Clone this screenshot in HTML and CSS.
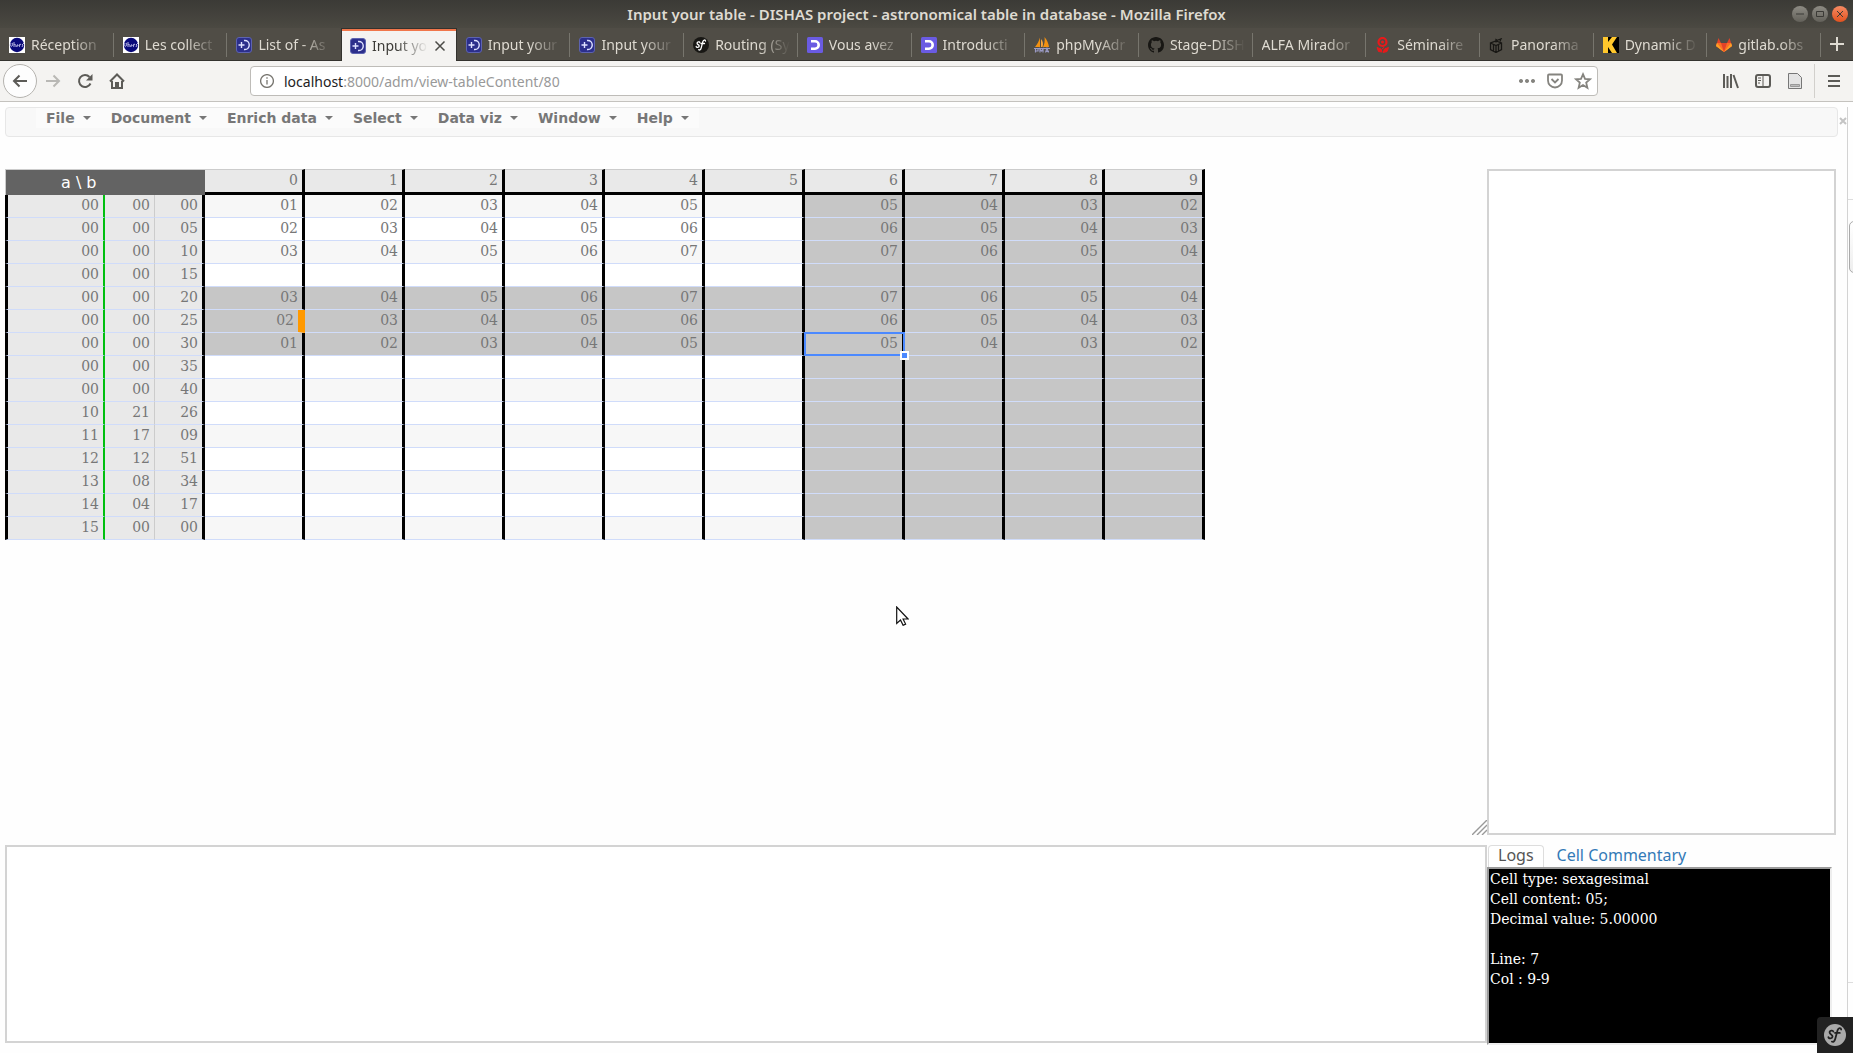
FILE: index.html
```html
<!DOCTYPE html>
<html lang="en">
<head>
<meta charset="utf-8">
<title>Input your table - DISHAS project</title>
<link rel="stylesheet" href="styles.css">
</head>
<body>
<svg class="defs" aria-hidden="true">
  <symbol id="obs" viewBox="0 0 16 16"><path fill="#fff" d="M0 0h16v16H0z"/><circle cx="8" cy="8" r="7.2" fill="#0a0a7a"/><path d="M2 6c-1 3 0 4 1 3s1-3 0-3M5 5v5M5 8c1-1 2-1 2 2M8 10c0-3 1-3 1-1M10 9c2-1 2-2 1-2s-1 3 0 3M13 7l1 1-1 2M14 6l1 1" fill="none" stroke="#c9c9ee" stroke-width=".9"/></symbol>
  <symbol id="dishas" viewBox="0 0 16 16"><rect x=".5" y=".5" width="15" height="15" rx="2.5" fill="#2c2f8c" stroke="#5d63b0"/><path d="M2.500 8h6M5.500 5v6M8 3.500c7-1 7 10 0 9" fill="none" stroke="#dfe2ff" stroke-width="1.400"/></symbol>
  <symbol id="symfony" viewBox="0 0 16 16"><circle cx="8" cy="8" r="8" fill="var(--disc)"/><path d="M6.800 5.600c-.2-1.300-2.900-.9-2.700.7.200 1.400 2.300 1.300 2.100 2.900-.2 1.500-2.900 1.700-3 .3M12.500 4c-.2-1.400-1.900-1.300-2.600.4L8.200 10.800c-.5 1.900-1.500 2.600-2.500 2M8 6.500h3.500" fill="none" stroke="var(--mark)" stroke-width="1.300" stroke-linecap="round"/></symbol>
  <symbol id="purple" viewBox="0 0 16 16"><rect width="16" height="16" rx="1.500" fill="#6a5be2"/><path d="M4 4.300h4a3.700 3.700 0 0 1 0 7.400H4" fill="none" stroke="#fff" stroke-width="2.600"/></symbol>
  <symbol id="pma" viewBox="0 0 16 16"><path d="M6 0.500v9.500H1C3.500 7 5 4 6 .5zM10.500 0c2.500 3 4 6 4.500 10H9c1.500-3 2-6 1.500-10z" fill="#f29111"/><path d="M7 2v8h1.500C9.500 7 9 4 7 2z" fill="#f7a53e"/><path d="M0 11.500h16M1.500 15.500v-4M1.500 14h2.500v-2.500M6 15.500v-3.500l1.500 2L9 12v3.500M11.500 15.500l1.500-4 1.500 4M12 14.500h3" fill="none" stroke="#9a9ac4" stroke-width="1.200"/></symbol>
  <symbol id="github" viewBox="0 0 16 16"><path fill="#181714" d="M8 0C3.580 0 0 3.580 0 8c0 3.540 2.290 6.530 5.470 7.590.4.070.55-.17.55-.38 0-.19-.01-.82-.01-1.490-2.010.37-2.530-.49-2.690-.94-.09-.23-.48-.94-.82-1.130-.28-.15-.68-.52-.01-.53.63-.01 1.080.58 1.230.82.72 1.210 1.870.87 2.330.66.07-.52.28-.87.51-1.070-1.780-.2-3.640-.89-3.640-3.950 0-.87.31-1.590.82-2.150-.08-.2-.36-1.020.08-2.120 0 0 .67-.21 2.200.82a7.500 7.500 0 0 1 4 0c1.530-1.040 2.200-.82 2.200-.82.44 1.100.16 1.920.08 2.120.51.56.82 1.270.82 2.150 0 3.070-1.870 3.750-3.650 3.950.29.25.54.73.54 1.480 0 1.070-.01 1.930-.01 2.200 0 .21.15.46.55.38A8 8 0 0 0 16 8c0-4.420-3.580-8-8-8z"/></symbol>
  <symbol id="flower" viewBox="0 0 16 16"><circle cx="7.500" cy="5" r="4" fill="none" stroke="#e8191a" stroke-width="2.200"/><circle cx="7.500" cy="5" r="1.500" fill="#e8191a"/><path d="M7.500 8.500l1 2M2 10.500l4 1.500 1 3-3.500-.5zM13.500 10.500L9.500 12l-1.500 3.500 4-1zM7 12l2-1.500" fill="#e8191a" stroke="#e8191a"/></symbol>
  <symbol id="cube" viewBox="0 0 16 16"><path d="M7 4l5.500 2v6.500L7 15.500l-5.500-3V6zM1.500 6L7 8.500 12.500 6M7 8.500v7M4.500 7.500v6M9.500 7.500v6M7 5.500V2.500l2 1M9 3l4-1.500M11 4.500l1-3" fill="none" stroke="#181714" stroke-width="1.300"/></symbol>
  <symbol id="kay" viewBox="0 0 16 16"><path fill="#000" d="M0 0h16v16H0z"/><path fill="#ffc72c" d="M0 0h5v5l4-5h5L9 7.500l5 8.500H9L5 10v6H0z"/></symbol>
  <symbol id="gitlab" viewBox="0 0 16 16"><path fill="#e24329" d="M8 15L0 9l2.500-8L5 6h6l2.500-5L16 9z"/><path fill="#fc6d26" d="M8 15L5 6H1L0 9zM8 15l3-9h4l1 3z"/><path fill="#fca326" d="M8 15L1 6 0 9zM8 15l7-9 1 3z"/></symbol>
</svg>

<header class="browser">
  <div class="titlebar">
    <span class="win-title">Input your table - DISHAS project - astronomical table in database - Mozilla Firefox</span>
    <div class="win-buttons">
      <button class="win" aria-label="Minimize"><svg viewBox="0 0 16 16"><path d="M4 8h8"/></svg></button>
      <button class="win" aria-label="Maximize"><svg viewBox="0 0 16 16"><path d="M4.500 5.500h7v5h-7z"/></svg></button>
      <button class="win win-close" aria-label="Close"><svg viewBox="0 0 16 16"><path d="M5 5l6 6M11 5l-6 6"/></svg></button>
    </div>
  </div>
  <nav class="tabs" aria-label="Tabs">
    <a class="tab" href="#"><svg class="fav"><use href="#obs"/></svg><span class="label">Réception</span></a>
    <a class="tab" href="#"><svg class="fav"><use href="#obs"/></svg><span class="label">Les collect</span></a>
    <a class="tab" href="#"><svg class="fav"><use href="#dishas"/></svg><span class="label">List of - As</span></a>
    <a class="tab active" href="#"><svg class="fav"><use href="#dishas"/></svg><span class="label">Input yo</span><svg class="tab-close" viewBox="0 0 12 12"><path d="M1.500 1.500l9 9M10.500 1.500l-9 9"/></svg></a>
    <a class="tab" href="#"><svg class="fav"><use href="#dishas"/></svg><span class="label">Input your</span></a>
    <a class="tab" href="#"><svg class="fav"><use href="#dishas"/></svg><span class="label">Input your</span></a>
    <a class="tab" href="#"><svg class="fav sf-dark"><use href="#symfony"/></svg><span class="label">Routing (Sy</span></a>
    <a class="tab" href="#"><svg class="fav"><use href="#purple"/></svg><span class="label">Vous avez</span></a>
    <a class="tab" href="#"><svg class="fav"><use href="#purple"/></svg><span class="label">Introducti</span></a>
    <a class="tab" href="#"><svg class="fav"><use href="#pma"/></svg><span class="label">phpMyAdr</span></a>
    <a class="tab" href="#"><svg class="fav"><use href="#github"/></svg><span class="label">Stage-DISH</span></a>
    <a class="tab" href="#"><span class="label">ALFA Mirador</span></a>
    <a class="tab" href="#"><svg class="fav"><use href="#flower"/></svg><span class="label">Séminaire</span></a>
    <a class="tab" href="#"><svg class="fav"><use href="#cube"/></svg><span class="label">Panorama</span></a>
    <a class="tab" href="#"><svg class="fav"><use href="#kay"/></svg><span class="label">Dynamic D</span></a>
    <a class="tab" href="#"><svg class="fav"><use href="#gitlab"/></svg><span class="label">gitlab.obs</span></a>
    <button class="new-tab" aria-label="New tab"><svg viewBox="0 0 14 14"><path d="M7 0v14M0 7h14"/></svg></button>
  </nav>
  <div class="toolbar">
    <div class="nav-buttons">
      <button class="tool back" aria-label="Back"><svg viewBox="0 0 16 16"><path d="M15 8H2M7.500 2.500L2 8l5.500 5.500"/></svg></button>
      <button class="tool forward" aria-label="Forward"><svg viewBox="0 0 16 16"><path d="M1 8h13M8.500 2.500L14 8l-5.500 5.500"/></svg></button>
      <button class="tool" aria-label="Reload"><svg viewBox="0 0 16 16"><path d="M13.500 10.500A6 6 0 1 1 12.500 4"/><path class="solid" d="M15.500 1v6.500H9z"/></svg></button>
      <button class="tool" aria-label="Home"><svg viewBox="0 0 16 16"><path d="M1 8.500L8 1.500l7 7M3 8v7h10V8"/><path class="solid" d="M6 9h4v6H6z"/></svg></button>
    </div>
    <div class="urlbar">
      <svg class="info" viewBox="0 0 14 14"><circle cx="7" cy="7" r="6.400"/><path d="M7 6v4.500M7 3.300v1.400"/></svg>
      <a class="url" href="#"><b>localhost</b>:8000/adm/view-tableContent/80</a>
      <button class="tool pale" aria-label="Page actions"><svg viewBox="0 0 16 16"><path class="solid" d="M2 6a2 2 0 1 0 .01 0zM8 6a2 2 0 1 0 .01 0zM14 6a2 2 0 1 0 .01 0z"/></svg></button>
      <button class="tool pale" aria-label="Save to Pocket"><svg viewBox="0 0 16 16"><path d="M2 1.500h12q1 0 1 1V7.500a7 7 0 0 1-14 0V2.500q0-1 1-1zM4.500 6L8 9.500 11.500 6"/></svg></button>
      <button class="tool pale" aria-label="Bookmark"><svg viewBox="0 0 16 16"><path d="M8 1.200l2 4.700 5 .4-3.800 3.300 1.200 5.200L8 12l-4.400 2.800 1.200-5.200L1 6.300l5-.4z"/></svg></button>
    </div>
    <div class="tool-buttons">
      <button class="tool" aria-label="Library"><svg viewBox="0 0 16 16"><path d="M1 1v14M4.500 3v12M8 1v14M10.500 2L15 15"/></svg></button>
      <button class="tool" aria-label="Sidebar"><svg viewBox="0 0 16 16"><rect x="1" y="2" width="14" height="12" rx="2"/><path d="M8 2v12M3 5h3M3 7.500h3M3 10h2" stroke-width="1"/></svg></button>
      <button class="tool" aria-label="Reader"><svg viewBox="0 0 16 16"><path class="sheet" d="M1.500.5h9l4 4v11h-13z"/><path class="sheet-bar" d="M3.500 11.500h9v2h-9z"/></svg></button>
    </div>
    <button class="tool menu" aria-label="Menu"><svg viewBox="0 0 12 16"><path d="M0 3h12M0 8h12M0 13h12"/></svg></button>
  </div>
</header>

<div class="page">
  <main class="content">
    <nav class="menubar" aria-label="Main menu">
      <button>File</button>
      <button>Document</button>
      <button>Enrich data</button>
      <button>Select</button>
      <button>Data viz</button>
      <button>Window</button>
      <button>Help</button>
    </nav>
    <div class="workspace">
      <section class="sheet-area">
        <table class="grid">
          <colgroup><col class="w-arg"><col class="w-half"><col class="w-half"><col span="10" class="w-val"></colgroup>
          <thead><tr><th class="corner" colspan="3">a \ b</th><th>0</th><th>1</th><th>2</th><th>3</th><th>4</th><th>5</th><th>6</th><th>7</th><th>8</th><th>9</th></tr></thead>
          <tbody>
            <tr><th>00</th><th>00</th><th>00</th><td>01</td><td>02</td><td>03</td><td>04</td><td>05</td><td></td><td>05</td><td>04</td><td>03</td><td>02</td></tr>
            <tr><th>00</th><th>00</th><th>05</th><td>02</td><td>03</td><td>04</td><td>05</td><td>06</td><td></td><td>06</td><td>05</td><td>04</td><td>03</td></tr>
            <tr><th>00</th><th>00</th><th>10</th><td>03</td><td>04</td><td>05</td><td>06</td><td>07</td><td></td><td>07</td><td>06</td><td>05</td><td>04</td></tr>
            <tr><th>00</th><th>00</th><th>15</th><td></td><td></td><td></td><td></td><td></td><td></td><td></td><td></td><td></td><td></td></tr>
            <tr class="locked"><th>00</th><th>00</th><th>20</th><td>03</td><td>04</td><td>05</td><td>06</td><td>07</td><td></td><td>07</td><td>06</td><td>05</td><td>04</td></tr>
            <tr class="locked"><th>00</th><th>00</th><th>25</th><td class="noted">02</td><td>03</td><td>04</td><td>05</td><td>06</td><td></td><td>06</td><td>05</td><td>04</td><td>03</td></tr>
            <tr class="locked"><th>00</th><th>00</th><th>30</th><td>01</td><td>02</td><td>03</td><td>04</td><td>05</td><td></td><td class="selected">05</td><td>04</td><td>03</td><td>02</td></tr>
            <tr><th>00</th><th>00</th><th>35</th><td></td><td></td><td></td><td></td><td></td><td></td><td></td><td></td><td></td><td></td></tr>
            <tr><th>00</th><th>00</th><th>40</th><td></td><td></td><td></td><td></td><td></td><td></td><td></td><td></td><td></td><td></td></tr>
            <tr><th>10</th><th>21</th><th>26</th><td></td><td></td><td></td><td></td><td></td><td></td><td></td><td></td><td></td><td></td></tr>
            <tr><th>11</th><th>17</th><th>09</th><td></td><td></td><td></td><td></td><td></td><td></td><td></td><td></td><td></td><td></td></tr>
            <tr><th>12</th><th>12</th><th>51</th><td></td><td></td><td></td><td></td><td></td><td></td><td></td><td></td><td></td><td></td></tr>
            <tr><th>13</th><th>08</th><th>34</th><td></td><td></td><td></td><td></td><td></td><td></td><td></td><td></td><td></td><td></td></tr>
            <tr><th>14</th><th>04</th><th>17</th><td></td><td></td><td></td><td></td><td></td><td></td><td></td><td></td><td></td><td></td></tr>
            <tr><th>15</th><th>00</th><th>00</th><td></td><td></td><td></td><td></td><td></td><td></td><td></td><td></td><td></td><td></td></tr>
          </tbody>
        </table>
        <svg class="grip" viewBox="0 0 15 15"><path d="M0 15L15 0M5 15L15 5M10 15l5-5"/></svg>
      </section>
      <section class="box"></section>
      <section class="box"></section>
      <section class="info-panel">
        <nav class="panel-tabs"><a class="current" href="#">Logs</a><a href="#">Cell Commentary</a></nav>
        <div class="log" role="log">Cell type: sexagesimal
Cell content: 05;
Decimal value: 5.00000

Line: 7
Col : 9-9</div>
      </section>
    </div>
  </main>
  <aside class="drawer">
    <button class="drawer-close" aria-label="Close panel"><svg viewBox="0 0 8 8"><path d="M1 1l6 6M7 1L1 7"/></svg></button>
    <div class="drawer-edge"><div class="drawer-head"></div><button class="drawer-button" aria-label="Open"></button><div class="drawer-foot"></div></div>
  </aside>
</div>
<button class="sf-toolbar" aria-label="Symfony toolbar"><svg class="sf-light"><use href="#symfony"/></svg></button>
<svg class="pointer" viewBox="0 0 13 20"><path d="M.7 1v16.500l3.800-3.500 2.600 5.300 2.500-1.200-2.500-5.100h5z"/></svg>
</body>
</html>
```
FILE: styles.css
```css
*, *::before, *::after { box-sizing: border-box; }
body {
  margin: 0;
  min-height: 100vh;
  display: flex;
  flex-direction: column;
  background: #fefefe;
  font-family: "DejaVu Serif", serif;
  font-size: 14px;
  line-height: 20px;
  color: #777;
}
button { border: 0; padding: 0; margin: 0; background: none; font: inherit; color: inherit; }
a { text-decoration: none; color: inherit; }
svg { display: block; }
.defs { position: absolute; width: 0; height: 0; }

/* browser window */
.browser { font-family: "Noto Sans", sans-serif; }
.titlebar {
  display: flex;
  align-items: center;
  height: 28px;
  padding: 0 5px 0 61px;
  background: linear-gradient(#3b3a36, #4b4942);
}
.win-title { flex: 1; text-align: center; font-size: 15px; font-weight: 600; color: #dfdbd2; line-height: 28px; }
.win-buttons { display: flex; gap: 4px; }
.win { width: 16px; height: 16px; border-radius: 8px; background: linear-gradient(#8d8b84, #63615a); }
.win svg { fill: none; stroke: #3b3a36; }
.win-close { background: linear-gradient(#f58a63, #e2521f); }

.tabs { display: flex; height: 33px; background: #504d46; border-bottom: 1px solid #33322e; }
.tab {
  flex: 1;
  min-width: 0;
  display: flex;
  align-items: center;
  gap: 6px;
  padding: 2px 9px 0 9px;
  color: #dfdbd2;
  background: linear-gradient(#77756d, #77756d) right 5px / 1px 24px no-repeat;
}
.fav { width: 16px; height: 16px; flex: none; }
.sf-dark { --disc: #181714; --mark: #fff; }
.label {
  flex: 1;
  white-space: nowrap;
  mask-image: linear-gradient(to left, transparent, #000 32px);
}
.tab:has(+ .active) { background: none; }
.tab.active {
  height: 33px;
  padding: 1px 10px 0 8px;
  color: #3b3a36;
  background: linear-gradient(#f0764b, #f0764b) 0 0 / 100% 2px no-repeat #f4f3f1;
  border: solid #33322e;
  border-width: 1px 1px 0;
}
.tab-close { width: 12px; height: 12px; fill: none; stroke: #4c4b47; stroke-width: 1.5; }
.new-tab { width: 32px; display: grid; place-items: center; }
.new-tab svg { width: 14px; stroke: #dfdbd2; stroke-width: 2; }

.toolbar {
  display: flex;
  align-items: center;
  height: 41px;
  padding: 0 13px 0 3px;
  background: #f4f3f1;
  border-bottom: 1px solid #c4c2be;
}
.tool { color: #5c5b57; }
.tool svg { width: 16px; height: 16px; overflow: visible; fill: none; stroke: currentColor; stroke-width: 2; }
.tool .solid { fill: currentColor; stroke: none; }
.nav-buttons { display: flex; align-items: center; width: 247px; gap: 16px; }
.back { width: 34px; height: 34px; margin-right: -8px; border: 1px solid #b5b3af; border-radius: 17px; background: #fdfdfd; display: grid; place-items: center; }
.forward { color: #b9b8b5; }
.urlbar {
  flex: 1;
  display: flex;
  align-items: center;
  gap: 12px;
  height: 30px;
  padding: 0 6px 0 9px;
  border: 1px solid #bebcb8;
  border-radius: 4px;
  background: #fff;
}
.info { width: 14px; fill: none; stroke: #77756f; stroke-width: 1.3; }
.url { flex: 1; margin-left: -2px; padding-top: 2px; color: #999; line-height: 26px; }
.url b { font-weight: 400; color: #222; }
.pale { color: #85847f; }
.pale svg { stroke-width: 1.8; }
.tool-buttons { display: flex; gap: 16px; margin-left: 125px; padding-right: 11px; height: 34px; align-items: center; border-right: 1px solid #d2d0cc; }
.tool .sheet { fill: #e4e4e4; stroke: #777; stroke-width: 1; }
.tool .sheet-bar { fill: #bbb; stroke: #999; stroke-width: 1; }
.menu { margin-left: 13px; }
.menu svg { width: 12px; }

/* page */
.page { flex: 1; display: flex; padding-top: 5px; }
.content { flex: 1; min-width: 0; display: flex; flex-direction: column; padding: 0 1px 8px 5px; }
.menubar {
  display: flex;
  align-items: flex-start;
  height: 30px;
  padding-left: 30px;
  background: #f8f8f8;
  border: 1px solid #e7e7e7;
  border-radius: 4px;
}
.menubar button {
  display: flex;
  align-items: center;
  gap: 8px;
  padding: 0 10px;
  line-height: 20px;
  background: #fbfbfb;
  font-family: "DejaVu Sans", sans-serif;
  font-weight: 700;
}
.menubar button::after { content: ""; border: 4px solid transparent; border-top-color: currentColor; border-bottom: 0; }

.workspace {
  flex: 1;
  display: grid;
  grid-template-columns: minmax(0, 1fr) 349px;
  grid-template-rows: 1fr 200px;
  row-gap: 10px;
  margin-top: 32px;
  padding-right: 2px;
}
.sheet-area { display: flex; flex-direction: column; justify-content: space-between; }
.grip { width: 15px; height: 15px; align-self: flex-end; fill: none; stroke: #999; stroke-width: 1.4; }
.box { border: 2px solid #d3d3d3; background: #fff; }
.box + .box { margin-bottom: 2px; }

.grid { width: 1200px; table-layout: fixed; border-collapse: separate; border-spacing: 0; }
.w-arg, .w-val { width: 100px; }
.w-half { width: 50px; }
.grid th, .grid td {
  height: 23px;
  padding: 0 4px 1px;
  font-weight: 400;
  text-align: right;
  line-height: 21px;
  border-right: 3px solid #000;
  border-bottom: 1px solid #d0dcfa;
}
.grid th { background: #e9e9e9; }
.grid thead th { height: 26px; padding-bottom: 1px; border-top: 1px solid #ccc; border-bottom: 3px solid #000; }
.grid thead .corner {
  padding: 0 0 0 55px;
  border: solid #ccc;
  border-width: 1px 0 0 1px;
  background: #636363;
  color: #fff;
  font-family: "DejaVu Sans", sans-serif;
  font-size: 16px;
  text-align: left;
}
.grid tbody th:nth-child(1) { border-left: 3px solid #000; border-right: 2px solid #00c010; }
.grid tbody th:nth-child(2) { border-right: 1px solid #ccc; }
.grid tbody tr:nth-child(odd) td { background: #f7f7f7; }
.grid tbody tr:nth-child(even) td { background: #fff; }
.grid tbody .locked td:nth-child(n), .grid tbody tr td:nth-child(n+10) { background: #c6c6c6; }
.grid .noted { border-right: 7px solid #f90; }
.grid .selected { position: relative; }
.selected::before { content: ""; position: absolute; inset: -1px -3px -1px -1px; border: 2px solid #4b89ff; }
.selected::after { content: ""; position: absolute; right: -7px; bottom: -5px; width: 9px; height: 9px; border: 2px solid #fff; background: #4b89ff; }

.info-panel { display: flex; flex-direction: column; padding-right: 4px; }
.panel-tabs { display: flex; height: 22px; padding-left: 1px; font-family: "Noto Sans", sans-serif; font-size: 16px; line-height: 18px; color: #337ab7; }
.panel-tabs a { padding: 0 12px; border: 1px solid transparent; border-bottom: 0; }
.panel-tabs .current { padding: 0 9px; border-color: #ddd; border-radius: 4px 4px 0 0; color: #555; background: #fff; }
.log {
  flex: 1;
  padding: 0 1px;
  background: #000;
  color: #fff;
  white-space: pre-wrap;
  border: 2px solid;
  border-color: #9a9a9a #eee #eee #9a9a9a;
}

.drawer { display: flex; align-items: flex-start; }
.drawer-close { width: 8px; margin-top: 10px; }
.drawer-close svg { width: 8px; fill: none; stroke: #c4c4c4; stroke-width: 2; }
.drawer-edge { width: 6px; align-self: stretch; border-left: 1px solid #d3d3d3; display: flex; flex-direction: column; overflow: hidden; }
.drawer-head { height: 93px; border-bottom: 1px solid #ddd; }
.drawer-button { width: 24px; height: 52px; margin: 21px 0 0 1px; border: 1px solid #aaa; border-radius: 5px; background: linear-gradient(#fff, #eee); }
.drawer-foot { margin-top: auto; height: 71px; border-top: 1px solid #ddd; }

.sf-toolbar { position: fixed; right: 0; bottom: 0; width: 36px; height: 36px; border-radius: 4px 0 0; background: #222; display: grid; place-items: center; }
.sf-light { width: 22px; height: 22px; --disc: #aaa; --mark: #222; }
.pointer { position: absolute; left: 896px; top: 606px; width: 13px; height: 20px; fill: #fff; stroke: #111; stroke-width: 1.2; }
```
